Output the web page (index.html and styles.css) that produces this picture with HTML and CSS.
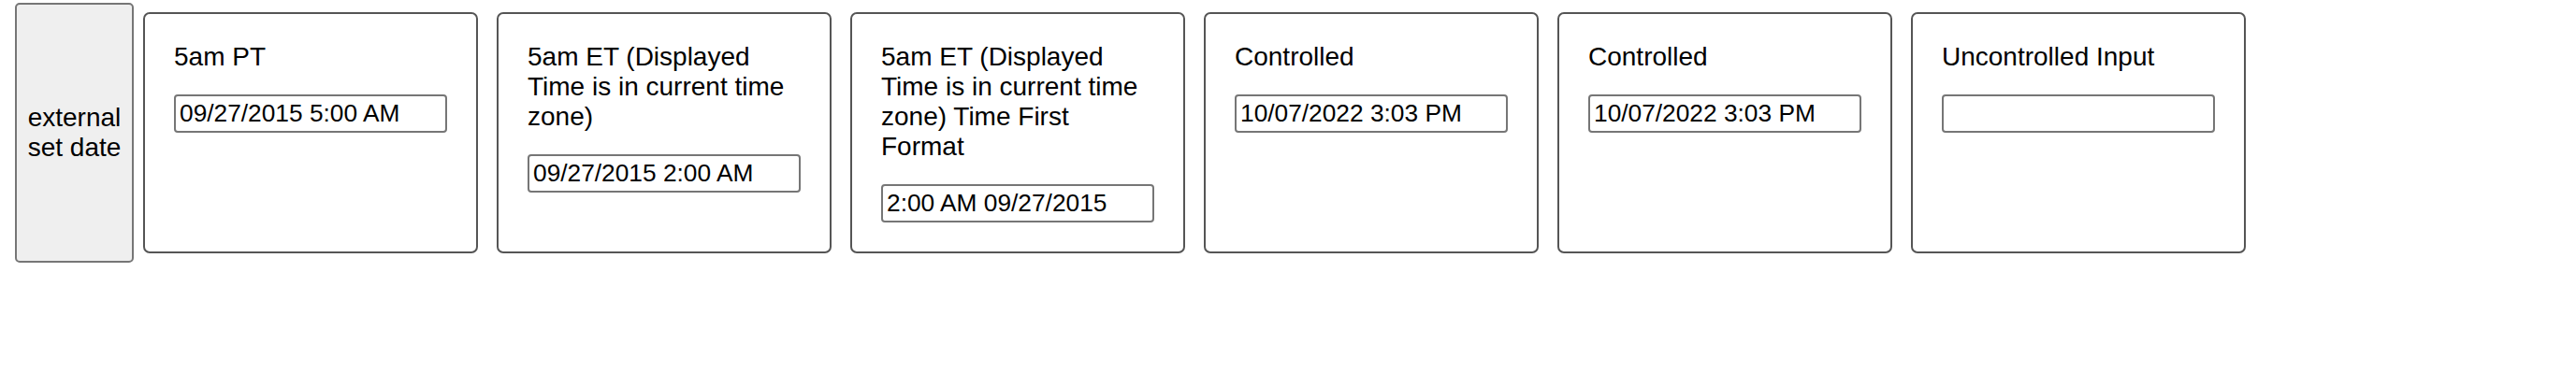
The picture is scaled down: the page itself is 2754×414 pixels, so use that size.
FILE: index.html
```html
<!DOCTYPE html>
<html>
<head>
<meta charset="utf-8">
<link rel="stylesheet" href="styles.css">
</head>
<body>
<div class="row">
  <button class="ext-btn" type="button">external set date</button>
  <div class="card">
    <div class="label">5am PT</div>
    <input class="field" type="text" value="09/27/2015 5:00 AM">
  </div>
  <div class="card">
    <div class="label">5am ET (Displayed Time is in current time zone)</div>
    <input class="field" type="text" value="09/27/2015 2:00 AM">
  </div>
  <div class="card">
    <div class="label">5am ET (Displayed Time is in current time zone) Time First Format</div>
    <input class="field" type="text" value="2:00 AM 09/27/2015">
  </div>
  <div class="card">
    <div class="label">Controlled</div>
    <input class="field" type="text" value="10/07/2022 3:03 PM">
  </div>
  <div class="card">
    <div class="label">Controlled</div>
    <input class="field" type="text" value="10/07/2022 3:03 PM">
  </div>
  <div class="card">
    <div class="label">Uncontrolled Input</div>
    <input class="field" type="text" value="">
  </div>
</div>
</body>
</html>
```

FILE: styles.css
```css
html, body {
  margin: 0;
  padding: 0;
  background: #ffffff;
}

body {
  font-family: "Liberation Sans", Arial, sans-serif;
  font-size: 28px;
  line-height: 32px;
  color: #000000;
}

.row {
  display: flex;
  align-items: stretch;
  padding: 3px 0 0 16px;
}

.ext-btn {
  width: 127px;
  flex: 0 0 auto;
  box-sizing: border-box;
  padding: 0 10px;
  margin: 0;
  font-family: "Liberation Sans", Arial, sans-serif;
  font-size: 28px;
  line-height: 32px;
  color: #000000;
  background: #efefef;
  border: 2px solid #767676;
  border-radius: 5px;
  text-align: center;
}

.card {
  width: 358px;
  flex: 0 0 auto;
  box-sizing: border-box;
  margin: 10px;
  padding: 30px 31px 31px 31px;
  border: 2px solid #555555;
  border-radius: 7px;
  display: flex;
  flex-direction: column;
  align-items: stretch;
}

.label {
  margin-bottom: 24px;
}

.field {
  display: block;
  width: 100%;
  height: 41px;
  box-sizing: border-box;
  margin: 0;
  padding: 0 4px;
  font-family: "Liberation Sans", Arial, sans-serif;
  font-size: 26.3px;
  color: #000000;
  background: #ffffff;
  border: 2px solid #767676;
  border-radius: 4px;
  outline: none;
}
```
